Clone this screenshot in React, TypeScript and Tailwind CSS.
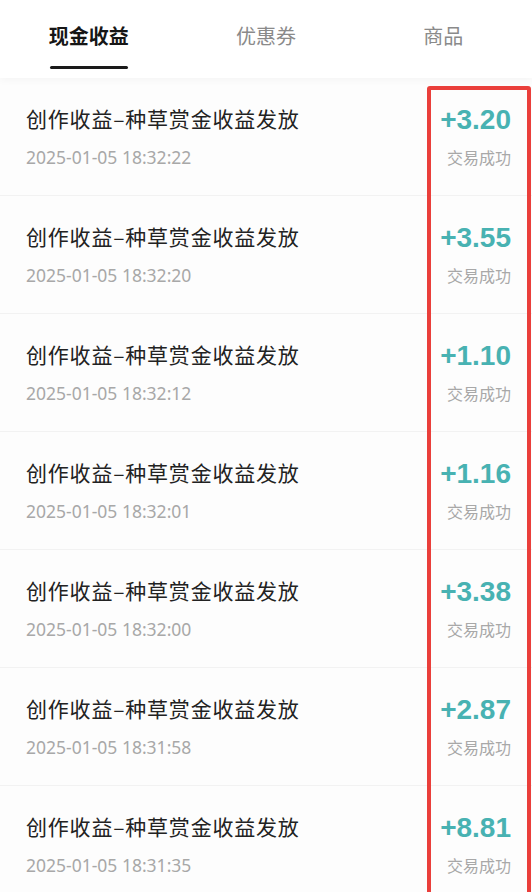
import React from 'react';

type Record = { time: string; amount: string };

const records: Record[] = [
  { time: '2025-01-05 18:32:22', amount: '+3.20' },
  { time: '2025-01-05 18:32:20', amount: '+3.55' },
  { time: '2025-01-05 18:32:12', amount: '+1.10' },
  { time: '2025-01-05 18:32:01', amount: '+1.16' },
  { time: '2025-01-05 18:32:00', amount: '+3.38' },
  { time: '2025-01-05 18:31:58', amount: '+2.87' },
  { time: '2025-01-05 18:31:35', amount: '+8.81' },
];

const cjk = { fontFamily: '"Noto Sans CJK SC", "Noto Sans", sans-serif' };

export default function App() {
  return (
    <div className="relative w-[532px] h-[892px] overflow-hidden bg-[#fdfdfd]" style={cjk}>
      <div className="grid grid-cols-3 h-[78px] bg-white shadow-[0_2px_8px_rgba(0,0,0,0.04)]">
        <div className="flex flex-col items-center pt-[19px]">
          <span className="text-[20px] leading-[34px] font-bold text-[#161616]">现金收益</span>
          <span className="mt-[13px] w-[78px] h-[3px] bg-[#1a1a1a] rounded-full" />
        </div>
        <div className="flex justify-center pt-[19px]">
          <span className="text-[20px] leading-[34px] text-[#8a8a8a]">优惠券</span>
        </div>
        <div className="flex justify-center pt-[19px]">
          <span className="text-[20px] leading-[34px] text-[#8a8a8a]">商品</span>
        </div>
      </div>

      <div className="flex flex-col">
        {records.map((r, i) => (
          <div
            key={i}
            className="flex justify-between items-start h-[118px] pt-[26px] pl-[26px] pr-[21px] border-b border-[#f2f2f2]"
          >
            <div className="flex flex-col gap-[14px]">
              <span className="text-[21px] leading-[28px] tracking-[0.8px] text-[#222]">创作收益–种草赏金收益发放</span>
              <span
                className="text-[17.5px] leading-[22px] text-[#a8a8a8]"
                style={{ fontFamily: '"Noto Sans", sans-serif' }}
              >
                {r.time}
              </span>
            </div>
            <div className="flex flex-col items-end gap-[10px]">
              <span
                className="text-[28px] leading-[32px] font-bold text-[#48b2b2]"
                style={{ fontFamily: '"Liberation Sans", Arial, sans-serif' }}
              >
                {r.amount}
              </span>
              <span className="text-[16px] leading-[22px] text-[#a8a8a8]">交易成功</span>
            </div>
          </div>
        ))}
      </div>

      <div className="absolute left-[427px] top-[86px] w-[104px] h-[830px] border-[4px] border-[#ea3f3b] rounded-[3px]" />
    </div>
  );
}
